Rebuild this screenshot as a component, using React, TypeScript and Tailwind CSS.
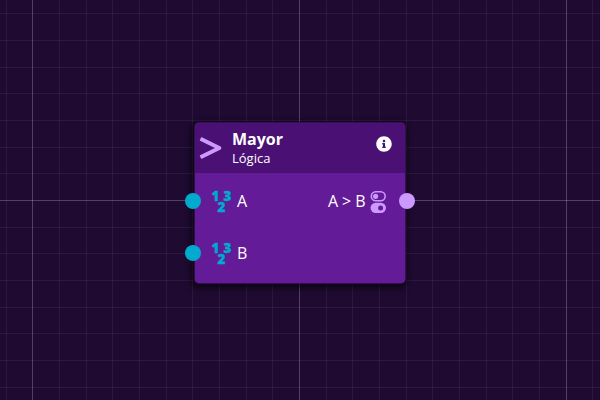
import React from "react";
import { FaInfoCircle } from "react-icons/fa";

const STEP = 80 / 3;
const range = Array.from({ length: 24 }, (_, i) => i - 12);

function Grid() {
  return (
    <svg className="absolute inset-0 h-full w-full" shapeRendering="crispEdges">
      {range.map((k) => (
        <React.Fragment key={k}>
          <rect x={Math.round(299.1 + k * STEP)} y={0} width={1} height={400} fill="#fff" fillOpacity={k % 10 === 0 ? 0.23 : 0.06} />
          <rect x={0} y={Math.round(200.1 + k * STEP)} width={600} height={1} fill="#fff" fillOpacity={k % 10 === 0 ? 0.23 : 0.06} />
        </React.Fragment>
      ))}
    </svg>
  );
}

function NumberIcon() {
  return (
    <svg
      viewBox="0 0 20 22"
      className="h-[22px] w-5 overflow-visible font-['Open_Sans',sans-serif] text-[13.5px] font-extrabold"
      fill="#00a9ce"
      stroke="#00a9ce"
      strokeWidth="0.4"
    >
      <text x="-0.4" y="11">1</text>
      <text x="11.5" y="11">3</text>
      <text x="5.6" y="22">2</text>
    </svg>
  );
}

function BooleanIcon() {
  return (
    <svg viewBox="0 0 16 22" className="relative top-px h-[22px] w-4" fill="none">
      <rect x="1.3" y="0.8" width="13.9" height="9" rx="4.5" stroke="#cc99ff" strokeWidth="1.6" />
      <circle cx="5.6" cy="5.3" r="2.6" fill="#cc99ff" />
      <rect x="0.5" y="11.7" width="15.5" height="10.3" rx="5.15" fill="#cc99ff" />
      <circle cx="10.6" cy="16.9" r="2.5" fill="#631b97" />
    </svg>
  );
}

function Port({ className }: { className: string }) {
  return <span className={`absolute top-1/2 h-4 w-4 -translate-y-1/2 rounded-full ${className}`} />;
}

export default function App() {
  return (
    <main className="relative flex h-[400px] w-[600px] overflow-hidden bg-[#1f0a31] pt-[122px] pl-[194px] font-['Open_Sans',sans-serif] text-white">
      <Grid />
      <article className="relative h-[161.5px] w-[212px] rounded-[5px] border border-black/45 bg-[#631b97] bg-clip-border shadow-[0_0_1px_0_rgba(0,0,0,0.85),-1px_2px_6px_2px_rgba(0,0,0,0.6)]">
        <header className="flex h-[50px] rounded-t-[4px] bg-[#4b1074] pl-1 pr-[13px]">
          <svg viewBox="0 0 23 24" className="mt-[13px] h-6 w-[23px] shrink-0" fill="none" stroke="#cc99ff" strokeWidth="4">
            <path d="M1.5 2.8L20.3 12L1.5 21.2" strokeLinejoin="round" />
          </svg>
          <div className="ml-[10px] flex-1 pt-[6px]">
            <h1 className="text-base leading-5 font-bold">Mayor</h1>
            <p className="text-[13px] leading-[18px]">Lógica</p>
          </div>
          <FaInfoCircle className="mt-[13px] h-4 w-4" />
        </header>
        <div className="relative flex h-14 items-center justify-between pl-[17px] pr-[19px]">
          <Port className="-left-[10px] bg-[#00a9ce]" />
          <div className="flex items-center gap-[5px]">
            <NumberIcon />
            <span className="text-base leading-6">A</span>
          </div>
          <div className="flex items-center gap-[4.6px]">
            <span className="text-base leading-6 tracking-[-0.1px]">A &gt; B</span>
            <BooleanIcon />
          </div>
          <Port className="-right-[10px] bg-[#cc99ff]" />
        </div>
        <div className="relative flex h-12 items-center pl-[17px]">
          <Port className="-left-[10px] bg-[#00a9ce]" />
          <div className="flex items-center gap-[5px]">
            <NumberIcon />
            <span className="text-base leading-6">B</span>
          </div>
        </div>
      </article>
    </main>
  );
}
